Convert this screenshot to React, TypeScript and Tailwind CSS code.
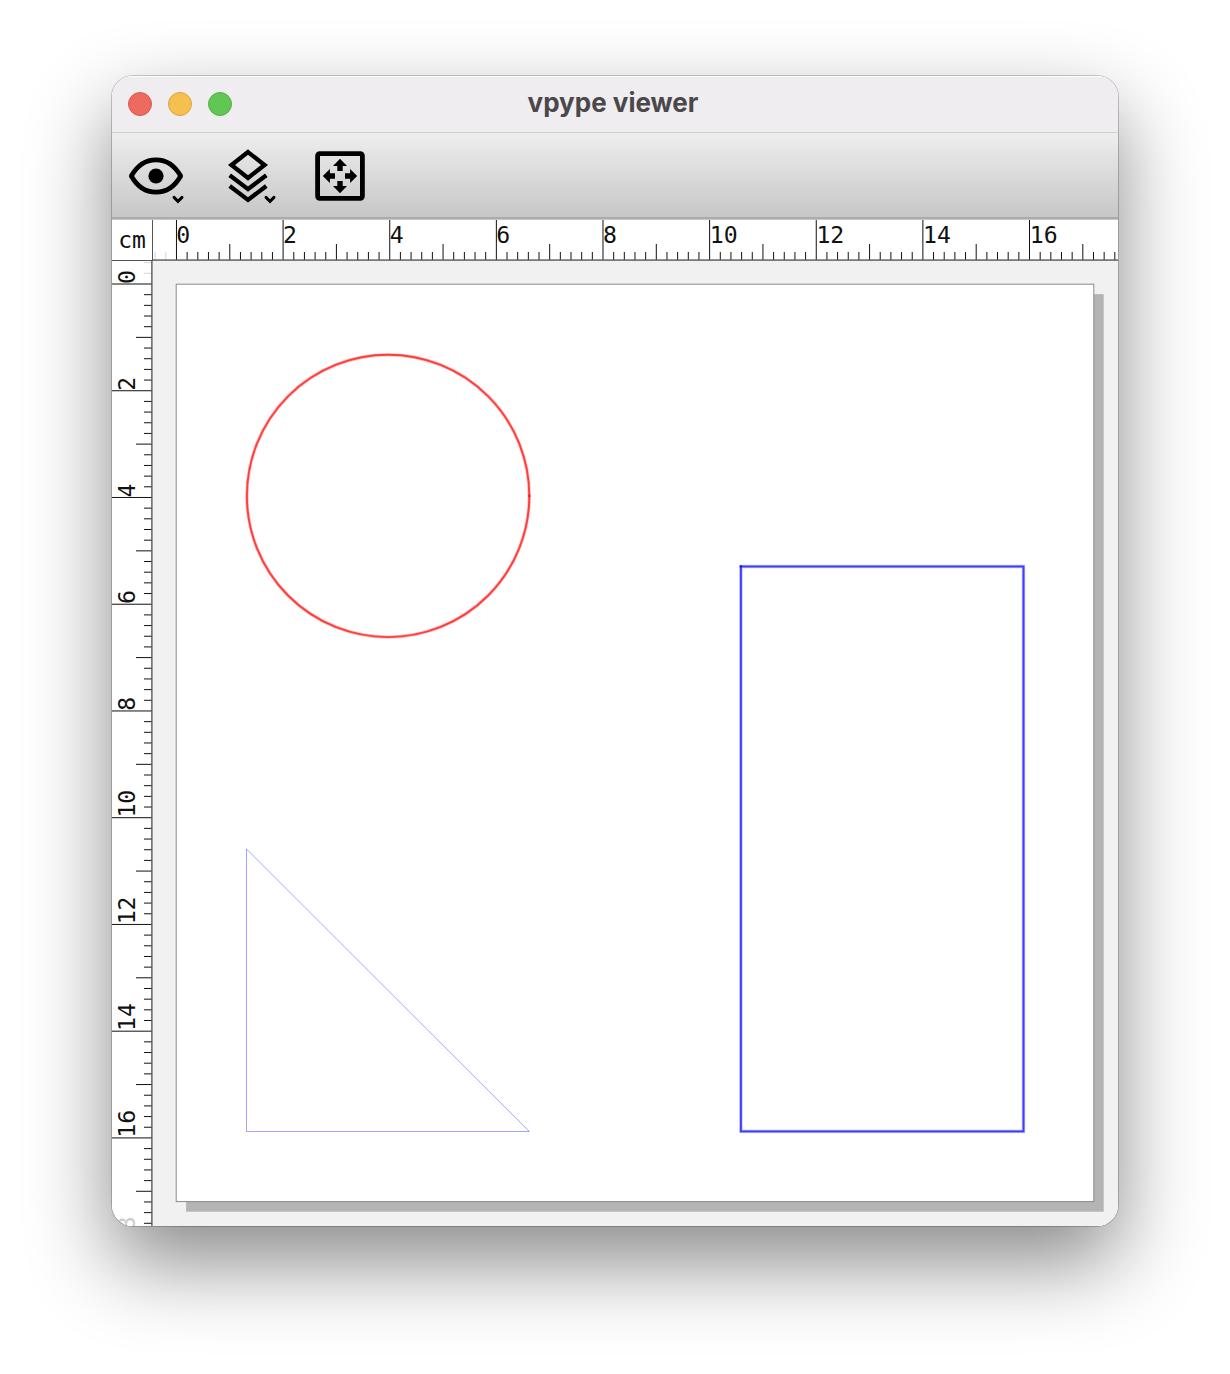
import React from 'react';

const CM = 53.37;
const RULER_FONT = '"DejaVu Sans Mono", monospace';

type Tick = { pos: number; len: number; faded: boolean };

function makeTicks(origin: number, limit: number): Tick[] {
  const ticks: Tick[] = [];
  for (let i = -2; origin + (i * CM) / 5 < limit; i++) {
    const len = i % 10 === 0 ? 40 : i % 5 === 0 ? 16 : 8;
    ticks.push({ pos: origin + (i * CM) / 5, len, faded: i < 0 });
  }
  return ticks;
}

const evens = [0, 2, 4, 6, 8, 10, 12, 14, 16];

function HorizontalRuler() {
  return (
    <svg width="966" height="41" viewBox="0 0 966 41" className="block bg-white">
      {makeTicks(23.5, 966).map((t) => (
        <line key={t.pos} x1={t.pos} x2={t.pos} y1={40 - t.len} y2={40} stroke={t.faded ? '#d4d4d4' : '#111'} strokeWidth="1" />
      ))}
      {evens.map((n) => (
        <text key={n} x={23.3 + n * 53.4} y={23.3} fontSize="23.2" fontFamily={RULER_FONT} fill="#111">
          {n}
        </text>
      ))}
      <rect x="0" y="39.4" width="966" height="1.4" fill="#555" />
    </svg>
  );
}

function VerticalRuler() {
  return (
    <svg width="41" height="965" viewBox="0 0 41 965" className="block bg-white">
      {makeTicks(23, 965).map((t) => (
        <line key={t.pos} y1={t.pos} y2={t.pos} x1={40 - t.len} x2={40} stroke={t.faded ? '#d4d4d4' : '#111'} strokeWidth="1" />
      ))}
      {[...evens, 18].map((n) => (
        <text
          key={n}
          transform={`translate(23.3 ${22.9 + n * CM}) rotate(-90)`}
          fontSize="23.2"
          fontFamily={RULER_FONT}
          fill={n === 18 ? '#ccc' : '#111'}
        >
          {n === 18 ? <tspan x="14">8</tspan> : n}
        </text>
      ))}
      <rect x="39.2" y="0" width="1.4" height="965" fill="#555" />
    </svg>
  );
}

function Caret() {
  return <path d="M50 54.4l4 4l4 -4" fill="none" stroke="#000" strokeWidth="2.9" strokeLinecap="round" />;
}

function EyeIcon() {
  return (
    <svg width="64" height="64" viewBox="0 0 64 64">
      <path
        d="M7.3 33C13 22.9 22 16.8 32 16.8S51 22.9 56.7 33C51 43.1 42 49.2 32 49.2S13 43.1 7.3 33Z"
        fill="none"
        stroke="#000"
        strokeWidth="4.7"
        strokeLinejoin="round"
      />
      <circle cx="32" cy="33" r="7.6" />
      <Caret />
    </svg>
  );
}

function LayersIcon() {
  return (
    <svg width="64" height="64" viewBox="0 0 64 64">
      <g fill="none" stroke="#000" strokeWidth="4.3">
        <path d="M32 9.1L48.5 22L32 34.9L15.5 22Z" />
        <path d="M13.7 32.3L32 46.1L50.3 32.3" />
        <path d="M13.7 43L32 56.9L50.3 43" />
      </g>
      <Caret />
    </svg>
  );
}

function FitIcon() {
  return (
    <svg width="64" height="64" viewBox="0 0 64 64">
      <rect x="9.6" y="10.6" width="44.8" height="44.8" rx="2.2" fill="none" stroke="#000" strokeWidth="4.8" />
      {[0, 90, 180, 270].map((a) => (
        <path key={a} transform={`rotate(${a} 32 33)`} d="M32 15.8L39 22.9H34.7V28H29.3V22.9H25Z" />
      ))}
    </svg>
  );
}

function Drawing() {
  return (
    <svg width="965" height="965" viewBox="153 261 965 965" className="block bg-[#f1f1f1]">
      <rect x="186.1" y="294.1" width="917.6" height="917.6" fill="#b4b4b4" />
      <rect x="176.2" y="284.2" width="917.6" height="917.4" fill="#fff" stroke="#8a8a8a" strokeWidth="1" />
      <circle cx="388.1" cy="495.9" r="141.2" fill="none" stroke="#ff0000" strokeOpacity="0.25" strokeWidth="3.4" />
      <circle cx="388.1" cy="495.9" r="141.2" fill="none" stroke="#ff0000" strokeOpacity="0.68" strokeWidth="1.9" />
      <circle cx="529.3" cy="495.9" r="1.4" fill="#ff0000" fillOpacity="0.6" />
      <rect x="740.9" y="566.5" width="282.6" height="564.9" fill="none" stroke="#0000ff" strokeOpacity="0.25" strokeWidth="3.4" />
      <rect x="740.9" y="566.5" width="282.6" height="564.9" fill="none" stroke="#0000ff" strokeOpacity="0.68" strokeWidth="1.9" />
      <circle cx="740.9" cy="566.5" r="1.4" fill="#0000ff" fillOpacity="0.6" />
      <path d="M246.5 849L246.5 1131.5L529.3 1131.5Z" fill="none" stroke="#0000ff" strokeOpacity="0.36" strokeWidth="1" />
    </svg>
  );
}

export default function App() {
  return (
    <div className="h-[1374px] w-[1230px] overflow-hidden bg-white px-[112px] pt-[76px]">
      <div className="h-[1150px] w-[1006px] rounded-[21px] shadow-[0_0_0_1px_rgba(0,0,0,0.2),0_36px_84px_rgba(0,0,0,0.47)]">
        <div className="flex h-full w-full flex-col overflow-hidden rounded-[21px] bg-white">
          <header className="flex h-[57px] shrink-0 items-center border-b border-[#d3d2d3] bg-[#f0edf0] px-4 shadow-[inset_0_1px_0_#fff]">
            <div className="flex w-[104px] gap-4">
              <span className="size-6 rounded-full border border-[#d9584e] bg-[#ed6a5f]" />
              <span className="size-6 rounded-full border border-[#dba33c] bg-[#f5c04f]" />
              <span className="size-6 rounded-full border border-[#54b045] bg-[#62c655]" />
            </div>
            <h1 className="flex-1 pr-[108px] pb-0.5 text-center font-['Inter'] text-[26px] leading-8 font-bold text-[#4a484a]">vpype viewer</h1>
          </header>
          <div className="flex h-[87px] shrink-0 gap-7 border-b border-[#c8c8c8] bg-linear-to-b from-[#eeeeee] to-[#c6c6c6] px-3 pt-[10px] shadow-[inset_0_-2px_0_#ababab]">
            <EyeIcon />
            <LayersIcon />
            <FitIcon />
          </div>
          <div className="flex h-[41px] shrink-0">
            <div className="flex h-[41px] w-[41px] shrink-0 items-center justify-center border-r border-b border-[#555] bg-white font-['DejaVu_Sans_Mono'] text-[23px] leading-none text-[#111]">
              cm
            </div>
            <HorizontalRuler />
          </div>
          <div className="flex h-[965px]">
            <VerticalRuler />
            <Drawing />
          </div>
        </div>
      </div>
    </div>
  );
}
